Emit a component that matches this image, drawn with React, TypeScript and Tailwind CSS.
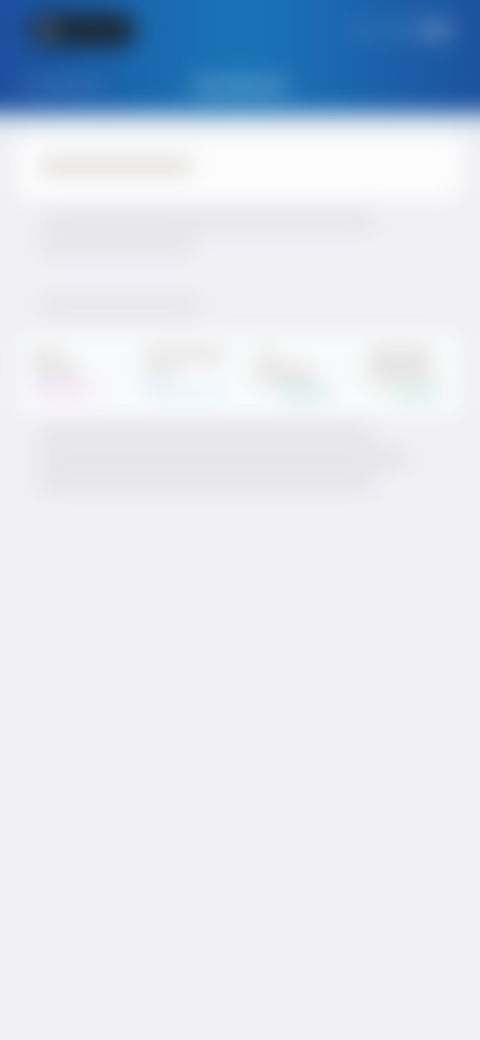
import clsx from "clsx";

type Column = { title: string; value: string; tag: string };

const COLUMNS: Column[] = [
  { title: "w-8 bg-stone-300/70", value: "w-12 bg-stone-300/80", tag: "w-16 bg-fuchsia-200/50" },
  { title: "w-20 bg-stone-300/70", value: "w-8 bg-stone-300/60", tag: "w-20 bg-sky-100/80" },
  { title: "w-5 bg-stone-300/60", value: "w-14 bg-stone-300/90", tag: "ml-6 w-12 bg-[#cdeae6]" },
  { title: "w-16 bg-stone-300/80", value: "w-16 bg-stone-300/90", tag: "ml-6 w-12 bg-[#d3efe7]" },
];

function Line({ className }: { className: string }) {
  return <div className={clsx("h-3 rounded-sm", className)} />;
}

function Header() {
  return (
    <header className="bg-[linear-gradient(to_right,#1b4f9e_10%,#1a69af_36%,#1874b5_50%,#1b69b0_64%,#1c509c_92%)] px-16 pt-16">
      <div className="flex h-15 items-center justify-between px-7">
        <div className="flex h-9 w-27 items-center rounded-full bg-[#1c2c3c] px-3">
          <div className="size-4 rounded-full bg-slate-500" />
        </div>
        <div className="flex items-center gap-2">
          <div className="h-3 w-8 rounded-sm bg-white/10" />
          <div className="h-4 w-5 rounded-sm bg-white/15" />
          <div className="h-5 w-8 rounded-md bg-white/25" />
        </div>
      </div>
      <nav className="grid h-13 grid-cols-3 items-center px-5">
        <button type="button" aria-label="Back" className="h-4 w-20 rounded-sm bg-white/10" />
        <div className="h-4 w-24 justify-self-center rounded-sm bg-white/25" />
      </nav>
    </header>
  );
}

export default function App() {
  return (
    <div className="min-h-screen overflow-hidden bg-[#f0f0f5] font-['Inter',sans-serif]">
      {/* Bleeds past the window so the blur does not fade at the sides */}
      <div className="-mx-16 -mt-16 blur-[11px]">
        <Header />
        <div className="h-5 bg-linear-to-b from-[#b5cfe9] to-[#f0f0f5]" />
        <main className="px-20">
          <section className="rounded-xl bg-[#fcfcfc] px-6 py-7">
            <Line className="w-38 bg-stone-300" />
          </section>
          <div className="flex flex-col gap-3 px-6 pt-4">
            <Line className="w-10/12 bg-[#dedee2]" />
            <Line className="w-38 bg-[#dedee2]" />
          </div>

          <section className="pt-12">
            <div className="px-6 pb-5">
              <Line className="w-40 bg-[#dedee2]" />
            </div>
            <div className="grid grid-cols-4 gap-x-4 rounded-xl bg-[#f8f9fa] py-4 pl-4">
              {COLUMNS.map((column, i) => (
                <div key={i} className="flex flex-col gap-2">
                  <Line className={column.title} />
                  <Line className={column.value} />
                  <Line className={column.tag} />
                </div>
              ))}
            </div>
            <div className="flex flex-col gap-3 px-6 pt-3">
              <Line className="w-10/12 bg-[#dcdce0]" />
              <Line className="w-11/12 bg-[#dcdce0]" />
              <Line className="w-10/12 bg-[#dcdce0]" />
            </div>
          </section>
        </main>
      </div>
    </div>
  );
}
